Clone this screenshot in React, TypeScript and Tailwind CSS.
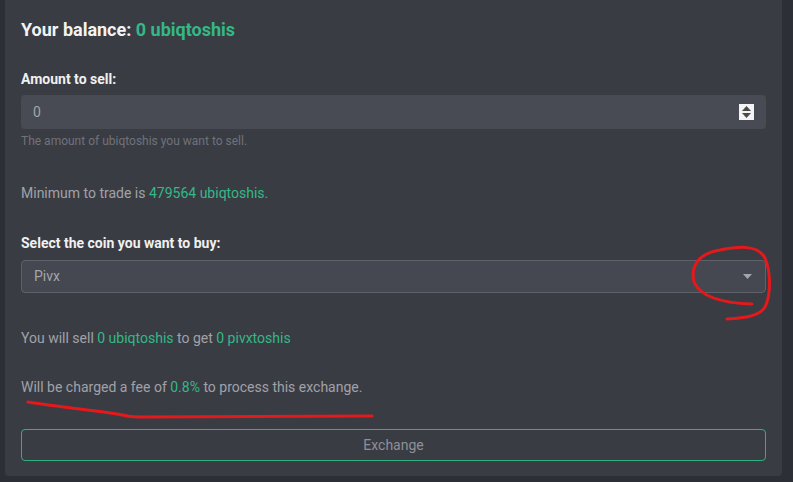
import React from "react";

const G = "text-[#34b886]";

export default function App() {
  return (
    <div className="relative w-[793px] h-[482px] bg-[#2d2f36] pl-[5px] pr-[11px] overflow-hidden" style={{ fontFamily: "Roboto, 'Noto Sans', sans-serif" }}>
      <div className="bg-[#3a3c44] rounded-b-[4px] pt-4 pb-[15px] px-4">
        <div className="text-[18px] leading-[28px] font-bold text-[#f3f3f3]">
          Your balance: <span className={G}>0 ubiqtoshis</span>
        </div>

        <div className="mt-[25px] text-[14px] leading-[20px] font-bold text-[#f0f0f0]">Amount to sell:</div>
        <div className="mt-[6px] h-[34px] rounded-[4px] bg-[#484b53] flex items-center justify-between pl-3 pr-3">
          <span className="text-[14px] text-[#a3a5ab]">0</span>
          <div className="w-[15px] h-[16px] bg-[#f4f4f4] flex flex-col items-center justify-center gap-[2px]">
            <svg width="9" height="5" viewBox="0 0 9 5"><path d="M4.5 0 L9 5 L0 5 Z" fill="#4a4a4a" /></svg>
            <svg width="9" height="5" viewBox="0 0 9 5"><path d="M0 0 L9 0 L4.5 5 Z" fill="#4a4a4a" /></svg>
          </div>
        </div>
        <div className="mt-[4px] text-[12px] leading-[16px] text-[#6f727a]">The amount of ubiqtoshis you want to sell.</div>

        <div className="mt-[34px] text-[14px] leading-[20px] text-[#a0a2a8]">
          Minimum to trade is <span className={G}>479564 ubiqtoshis.</span>
        </div>

        <div className="mt-[30px] text-[14px] leading-[20px] font-bold text-[#f0f0f0]">Select the coin you want to buy:</div>
        <div className="mt-[7px] h-[33px] rounded-[4px] bg-[#454850] border border-[#5e6169] flex items-center justify-between pl-3 pr-[13px]">
          <span className="text-[14px] text-[#a3a5ab]">Pivx</span>
          <svg width="9" height="5" viewBox="0 0 9 5"><path d="M0 0 L9 0 L4.5 5 Z" fill="#a3a5ab" /></svg>
        </div>

        <div className="mt-[35px] text-[14px] leading-[20px] text-[#a0a2a8]">
          You will sell <span className={G}>0 ubiqtoshis</span> to get <span className={G}>0 pivxtoshis</span>
        </div>

        <div className="mt-[29px] text-[14px] leading-[20px] text-[#a0a2a8]">
          Will be charged a fee of <span className={G}>0.8%</span> to process this exchange.
        </div>

        <button className="mt-[32px] w-full h-[32px] rounded-[4px] border border-[#2fb07f] bg-transparent text-[14px] text-[#8e9097] flex items-center justify-center">
          Exchange
        </button>
      </div>

      <svg className="absolute left-0 top-0 pointer-events-none" width="793" height="482" viewBox="0 0 793 482">
        <path d="M752,304 C720,303 700,296 694,282 C690,265 700,253 720,250 C740,246 758,245 765,258 C771,272 771,295 765,307 C760,316 745,318 727,319" fill="none" stroke="#e3191c" strokeWidth="3" strokeLinecap="round" strokeLinejoin="round" />
        <path d="M28,402 C60,407 90,410 117,414 C125,416 130,417 140,417 L372,416" fill="none" stroke="#e3191c" strokeWidth="3" strokeLinecap="round" strokeLinejoin="round" />
      </svg>
    </div>
  );
}
